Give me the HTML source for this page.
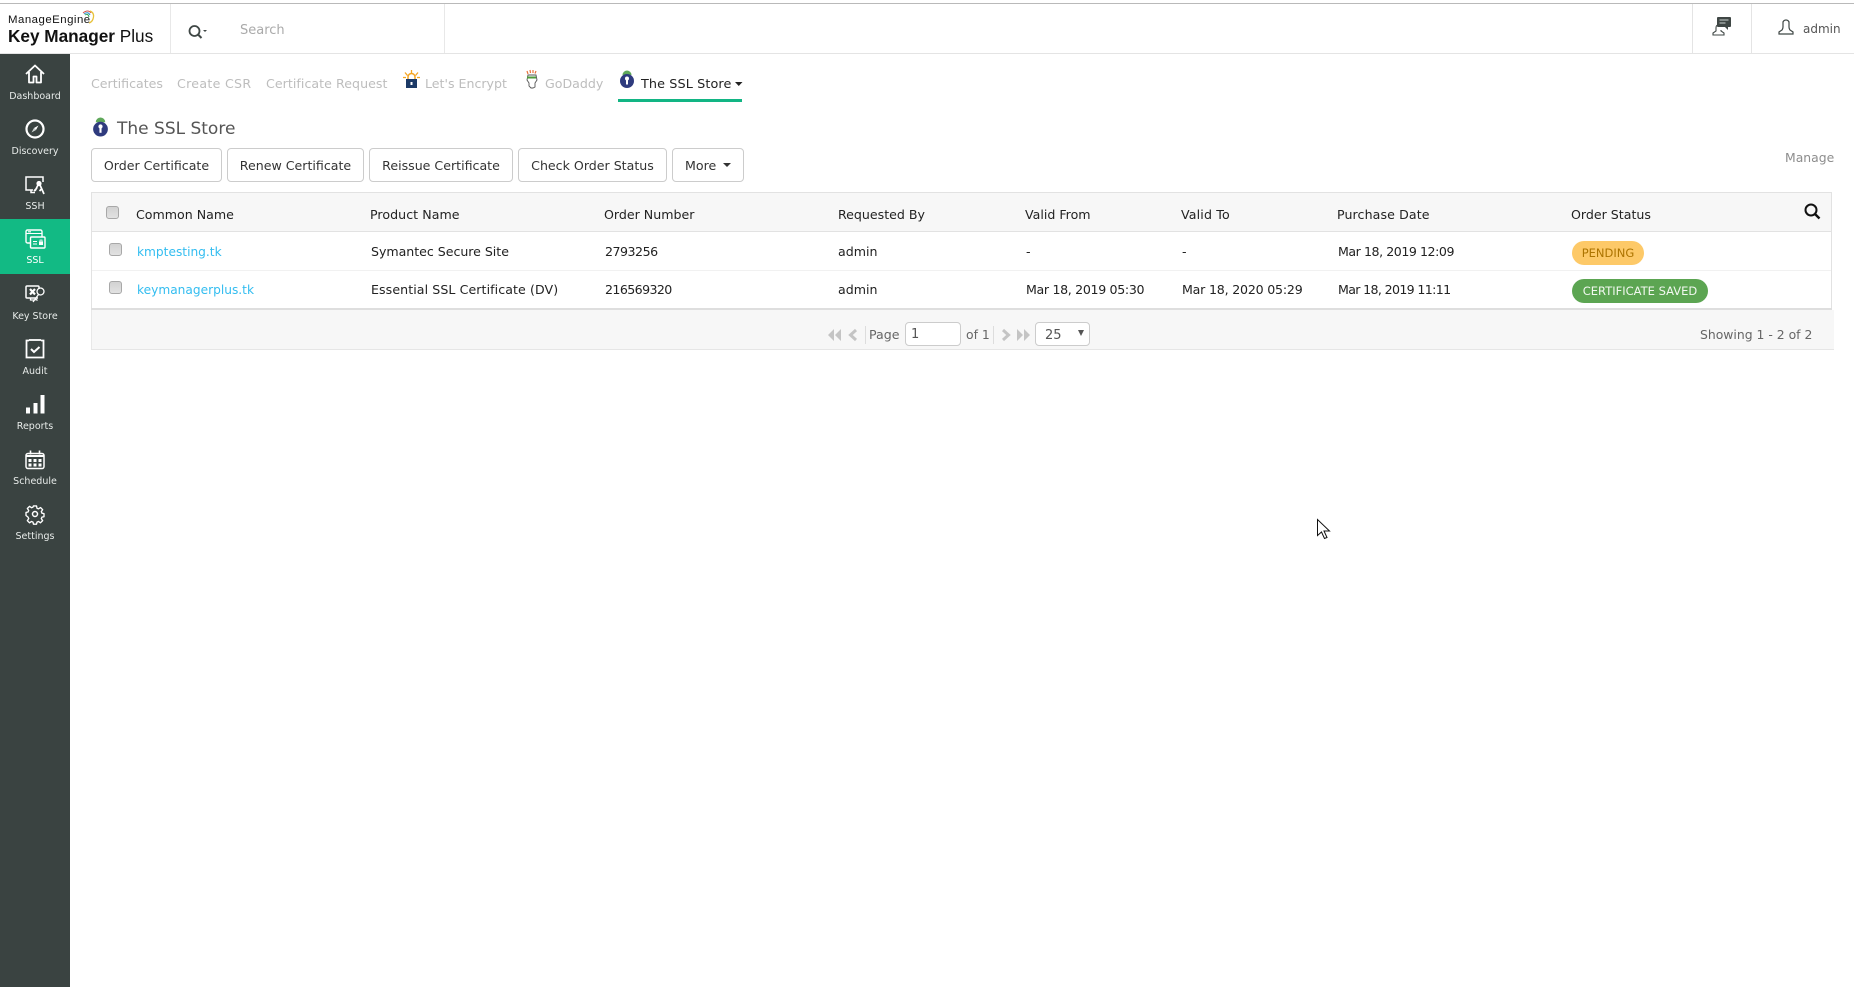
<!DOCTYPE html>
<html><head><meta charset="utf-8"><title>Key Manager Plus</title>
<style>
html,body{margin:0;padding:0;width:1854px;height:987px;overflow:hidden;background:#fff}
body{position:relative;font-family:"DejaVu Sans","Liberation Sans",sans-serif;font-size:13px;color:#222}
.a,.t{position:absolute}
.t{white-space:nowrap;line-height:20px;height:20px}
.side{position:absolute;left:0;top:54px;width:70px;height:933px;background:#3a4341}
.lb{position:absolute;left:0;width:70px;text-align:center;font-size:9.5px;line-height:14px;color:#e8ecea;white-space:nowrap}
.tab{color:#bdbdbd;font-size:12.6px}
.btn{position:absolute;top:148px;height:32px;border:1px solid #ccc;border-radius:4px;background:#fff;color:#333;text-align:center;line-height:33px;font-size:12.6px;white-space:nowrap;box-sizing:content-box}
.cb{position:absolute;width:11px;height:11px;background:linear-gradient(#d2d2d2,#e2e2e2);border:1px solid #a8a8a8;border-radius:3px}
.th{color:#222;font-size:12.6px}
.td{color:#222;font-size:12.6px}
.lnk{color:#33bdf0;font-size:12.2px}
.bd{position:absolute;height:24px;border-radius:12px;text-align:center;line-height:24px;font-size:11.5px;white-space:nowrap}
svg{position:absolute;overflow:visible}
</style></head><body>
<!-- top header -->
<div class="a" style="left:0;top:3px;width:1854px;height:1px;background:#b9b9b9"></div>
<div class="a" style="left:0;top:53px;width:1854px;height:1px;background:#e4e4e4"></div>
<div class="a" style="left:170px;top:4px;width:1px;height:49px;background:#e8e8e8"></div>
<div class="a" style="left:444px;top:4px;width:1px;height:49px;background:#e8e8e8"></div>
<div class="a" style="left:1692px;top:4px;width:1px;height:49px;background:#e4e4e4"></div>
<div class="a" style="left:1751px;top:4px;width:1px;height:49px;background:#e4e4e4"></div>
<span class="t" style="left:8px;top:10px;font-size:11.4px;color:#111;font-family:'Liberation Sans',sans-serif;letter-spacing:.5px">ManageEngine</span>
<svg style="left:82px;top:10px" width="14" height="14" viewBox="0 0 14 14" fill="none"><path d="M1 3Q6-1 9 3" stroke="#d9534f" stroke-width="1"/><path d="M2 4Q6 1 8 5" stroke="#2a8fc9" stroke-width="1"/><path d="M8 1Q13 3 11 9Q10 12 7 13" stroke="#e8c23a" stroke-width="1.3"/><path d="M3 5Q6 3 7 7" stroke="#3aa655" stroke-width="1"/></svg>
<span class="t" style="left:8px;top:26px;font-size:17.2px;color:#111;font-family:'Liberation Sans',sans-serif"><span style="font-weight:700">Key Manager</span> Plus</span>
<svg style="left:188px;top:24px" width="20" height="16" viewBox="0 0 20 16" fill="none"><circle cx="6.5" cy="7" r="5" stroke="#3f4745" stroke-width="1.8"/><path d="M10 10.500l3.500 3.500" stroke="#3f4745" stroke-width="2"/><path d="M15 6h4l-2 2z" fill="#3f4745"/></svg>
<span class="t" style="left:240px;top:21px;color:#aaa;font-size:13px">Search</span>
<svg style="left:1712px;top:17px" width="20" height="19" viewBox="0 0 20 19" fill="none"><path d="M6 0h12a1 1 0 0 1 1 1v8a1 1 0 0 1-1 1h-2v3l-3-3H6a1 1 0 0 1-1-1V1a1 1 0 0 1 1-1z" fill="#3f4745"/><path d="M7.500 3h9M7.500 6h6" stroke="#c9d0ce" stroke-width="1"/><path d="M4 11v3l-3 2v2h11v-2l-3-2v-1M4 11c0-2 1-3 2-3" stroke="#3f4745" stroke-width="1.100"/></svg>
<svg style="left:1778px;top:20px" width="16" height="15" viewBox="0 0 16 15" fill="none"><path d="M5 2.500a3 2.500 0 0 1 6 0V7c0 1.500.5 2 1 3l3 2v2H1v-2l3-2c.5-1 1-1.500 1-3z" stroke="#3f4745" stroke-width="1.200"/></svg>
<span class="t" style="left:1803px;top:19px;color:#555;font-size:12px">admin</span>

<!-- sidebar -->
<div class="side"></div>
<div class="a" style="left:0;top:219px;width:70px;height:55px;background:#12ba84"></div>
<svg style="left:25px;top:64px" width="20" height="20" viewBox="0 0 20 20" fill="none" stroke="#fff" stroke-width="1.800" stroke-linejoin="round"><path d="M1 10L10 1.500 19 10M4 8v10.500h4.500V12.500h3v6H16V8"/></svg>
<svg style="left:25px;top:119px" width="20" height="20" viewBox="0 0 20 20" fill="none"><circle cx="10" cy="10" r="8.500" stroke="#fff" stroke-width="2.200"/><path d="M13.500 6.500L11 11 9 9z" fill="#fff"/><path d="M6.500 13.500L11 11 9 9z" fill="#cfd5d3"/></svg>
<svg style="left:25px;top:176px" width="21" height="20" viewBox="0 0 21 20" fill="none"><path d="M18 6V1H1v13h7M6 14v2.500h4" stroke="#fff" stroke-width="1.500"/><circle cx="14" cy="7.500" r="2.600" fill="#fff"/><path d="M13 9l-3 6M15 9l4 9M12 12l-3 3M16.500 13l-2 2" stroke="#fff" stroke-width="1.700"/></svg>
<svg style="left:25px;top:229px" width="21" height="20" viewBox="0 0 21 20" fill="none" stroke="#fff"><rect x="1" y="1" width="16" height="13" rx="1.500" stroke-width="1.400"/><path d="M1 4.500h16M3 2.800h3" stroke-width="1.100"/><rect x="5.500" y="8" width="14.500" height="11" rx="1" fill="#12ba84" stroke-width="1.400"/><path d="M8 12.500h4M8 15h4" stroke-width="1.100"/><rect x="14" y="12.500" width="4" height="3.500" fill="#fff" stroke="none"/><path d="M15 12.500v-1.500h2v1.500" stroke-width=".8"/></svg>
<svg style="left:25px;top:285px" width="21" height="20" viewBox="0 0 21 20" fill="none" stroke="#fff"><path d="M13 13H2a1 1 0 0 1-1-1V2a1 1 0 0 1 1-1h11a1 1 0 0 1 1 1v2" stroke-width="1.500"/><path d="M5 4l5 5.500M10 4L5 9.500" stroke-width="2.200"/><path d="M5.500 13v2h5" stroke-width="1.300"/><circle cx="15.500" cy="6.500" r="3.500" stroke-width="1.300"/><path d="M13.500 9.500L8 17M10.500 14l2 1.500" stroke-width="1.300"/></svg>
<svg style="left:25px;top:339px" width="20" height="20" viewBox="0 0 20 20" fill="none" stroke="#fff"><path d="M4 1.500H1.500v17h17v-17H16" stroke-width="1.800"/><path d="M4 1h12" stroke-width="1.800"/><path d="M6 10l3 3 5.500-5" stroke-width="2"/></svg>
<svg style="left:25px;top:394px" width="20" height="20" viewBox="0 0 20 20" fill="#fff"><rect x="1" y="13.500" width="4" height="6"/><rect x="8.500" y="9" width="4" height="10.500"/><rect x="15.500" y="1" width="4" height="18.500"/></svg>
<svg style="left:25px;top:450px" width="20" height="20" viewBox="0 0 20 20" fill="none" stroke="#fff"><rect x="1" y="3.500" width="18" height="15" rx="2" stroke-width="1.500"/><path d="M1 5h18v2H1z" fill="#fff" stroke="none"/><path d="M5.500 0.500v4M14.500 0.500v4" stroke-width="1.600"/><g fill="#fff" stroke="none"><rect x="3.500" y="9" width="3" height="3"/><rect x="8.500" y="9" width="3" height="3"/><rect x="13.500" y="9" width="3" height="3"/><rect x="3.500" y="13.500" width="3" height="3"/><rect x="8.500" y="13.500" width="3" height="3"/><rect x="13.500" y="13.500" width="3" height="3"/></g></svg>
<svg style="left:25px;top:504px" width="20" height="20" viewBox="0 0 20 20" fill="none" stroke="#fff" stroke-width="1.500" stroke-linejoin="round"><path d="M8.300 1h3.400l.5 2.600 1.700.7 2.200-1.500 2.400 2.400-1.500 2.200.7 1.700 2.300.5v3.400l-2.300.5-.7 1.700 1.500 2.200-2.400 2.400-2.200-1.500-1.700.7-.5 2.300H8.300l-.5-2.300-1.700-.7-2.200 1.500-2.400-2.400 1.500-2.200-.7-1.700L0 11.700V8.300l2.300-.5.7-1.700L1.500 3.900l2.400-2.400 2.200 1.500 1.700-.7z" transform="translate(1 1) scale(.9)"/><circle cx="10" cy="10" r="2.500"/></svg>
<div class="lb" style="top:90px">Dashboard</div>
<div class="lb" style="top:145px">Discovery</div>
<div class="lb" style="top:200px">SSH</div>
<div class="lb" style="top:254px;color:#fff">SSL</div>
<div class="lb" style="top:310px">Key Store</div>
<div class="lb" style="top:365px">Audit</div>
<div class="lb" style="top:420px">Reports</div>
<div class="lb" style="top:475px">Schedule</div>
<div class="lb" style="top:530px">Settings</div>

<!-- tabs -->
<span class="t tab" style="left:91px;top:74px">Certificates</span>
<span class="t tab" style="left:177px;top:74px;letter-spacing:.3px">Create CSR</span>
<span class="t tab" style="left:266px;top:74px;letter-spacing:.05px">Certificate Request</span>
<svg style="left:403px;top:70px" width="17" height="19" viewBox="0 0 17 19" fill="none"><path d="M8.500 0v4M2 2.500l2.500 3M15 2.500l-2.500 3M0 7.500h3M14 7.500h3" stroke="#f5a623" stroke-width="1.300"/><path d="M5 9V7a3.500 3.500 0 0 1 7 0v2" stroke="#f5a623" stroke-width="1.500"/><rect x="3" y="9" width="11" height="9" fill="#1c3a66"/><rect x="7.500" y="12" width="2" height="3" fill="#fff"/></svg>
<span class="t tab" style="left:425px;top:74px">Let's Encrypt</span>
<svg style="left:525px;top:70px" width="15" height="19" viewBox="0 0 15 19" fill="none"><path d="M2 1l1 3M5 0l.5 3M8 0v3M11 1l-1 2.500" stroke="#e8703a" stroke-width="1.200"/><path d="M3 5h8l1 5-2 3v4l-2 1H6l-2-2v-3L2 10z" fill="#fff" stroke="#555" stroke-width=".9"/><rect x="2" y="6.500" width="9" height="2" fill="#4f9a3a"/></svg>
<span class="t tab" style="left:545px;top:74px">GoDaddy</span>
<svg style="left:620px;top:70px" width="14" height="19" viewBox="0 0 14 19"><path d="M2.500 5a4.500 4.500 0 0 1 9 0z" fill="#5fa85a"/><circle cx="7" cy="11" r="7" fill="#2f3b7e"/><circle cx="7" cy="8.500" r="2" fill="#fff"/><rect x="6" y="9" width="2" height="5.500" fill="#fff"/></svg>
<span class="t" style="left:641px;top:75px;color:#222;font-size:12.8px;letter-spacing:.1px">The SSL Store</span>
<svg style="left:734.500px;top:82px" width="8" height="4" viewBox="0 0 8 4"><path d="M0 0h7.500L3.750 4z" fill="#222"/></svg>
<div class="a" style="left:618px;top:99px;width:124px;height:3px;background:#12b584"></div>

<!-- title -->
<svg style="left:93px;top:117px" width="15" height="20" viewBox="0 0 14 19"><path d="M2.500 5a4.500 4.500 0 0 1 9 0z" fill="#5fa85a"/><circle cx="7" cy="11.500" r="7" fill="#2f3b7e"/><circle cx="7" cy="9" r="2" fill="#fff"/><rect x="6" y="9.500" width="2" height="5.500" fill="#fff"/></svg>
<span class="t" style="left:117px;top:119px;font-size:17px;color:#555">The SSL Store</span>

<!-- buttons -->
<div class="btn" style="left:91px;width:129px">Order Certificate</div>
<div class="btn" style="left:227px;width:135px">Renew Certificate</div>
<div class="btn" style="left:369px;width:142px">Reissue Certificate</div>
<div class="btn" style="left:518px;width:147px">Check Order Status</div>
<div class="btn" style="left:672px;width:70px;text-align:left;text-indent:12px">More</div>
<svg style="left:723px;top:163px" width="8" height="4" viewBox="0 0 8 4"><path d="M0 0h8L4 4z" fill="#333"/></svg>
<span class="t" style="left:1785px;top:148px;color:#8d8d8d;font-size:12.4px">Manage</span>

<!-- table -->
<div class="a" style="left:91px;top:192px;width:1741px;height:39px;background:#f7f7f7"></div>
<div class="a" style="left:91px;top:192px;width:1741px;height:1px;background:#e2e2e2"></div>
<div class="a" style="left:91px;top:231px;width:1741px;height:1px;background:#e2e2e2"></div>
<div class="a" style="left:91px;top:270px;width:1741px;height:1px;background:#f1f1f1"></div>
<div class="a" style="left:91px;top:192px;width:1px;height:118px;background:#e2e2e2"></div>
<div class="a" style="left:1831px;top:192px;width:1px;height:118px;background:#e2e2e2"></div>
<div class="a" style="left:91px;top:308px;width:1741px;height:2px;background:#dedede"></div>
<div class="a" style="left:91px;top:310px;width:1743px;height:39px;background:#f7f7f7"></div>
<div class="a" style="left:91px;top:310px;width:1px;height:40px;background:#e8e8e8"></div>
<div class="a" style="left:91px;top:349px;width:1743px;height:1px;background:#e6e6e6"></div>

<div class="cb" style="left:106px;top:206px"></div>
<div class="cb" style="left:109px;top:243px"></div>
<div class="cb" style="left:109px;top:281px"></div>

<span class="t th" style="left:136px;top:205px">Common Name</span>
<span class="t th" style="left:370px;top:205px;letter-spacing:.05px">Product Name</span>
<span class="t th" style="left:604px;top:205px">Order Number</span>
<span class="t th" style="left:838px;top:205px">Requested By</span>
<span class="t th" style="left:1025px;top:205px">Valid From</span>
<span class="t th" style="left:1181px;top:205px;letter-spacing:.15px">Valid To</span>
<span class="t th" style="left:1337px;top:205px;letter-spacing:.1px">Purchase Date</span>
<span class="t th" style="left:1571px;top:205px">Order Status</span>
<svg style="left:1804px;top:203px" width="17" height="17" viewBox="0 0 17 17" fill="none"><circle cx="7" cy="7" r="5.500" stroke="#111" stroke-width="2"/><path d="M11 11l4.500 4.500" stroke="#111" stroke-width="2.400"/></svg>

<span class="t lnk" style="left:137px;top:242px">kmptesting.tk</span>
<span class="t td" style="left:371px;top:242px;letter-spacing:-.03px">Symantec Secure Site</span>
<span class="t td" style="left:605px;top:242px;letter-spacing:-.5px">2793256</span>
<span class="t td" style="left:838px;top:242px">admin</span>
<span class="t td" style="left:1026px;top:242px">-</span>
<span class="t td" style="left:1182px;top:242px">-</span>
<span class="t td" style="left:1338px;top:242px;letter-spacing:-.45px">Mar 18, 2019 12:09</span>
<div class="bd" style="left:1572px;top:241px;width:72px;background:#fdc968;color:#ad7400">PENDING</div>

<span class="t lnk" style="left:137px;top:280px">keymanagerplus.tk</span>
<span class="t td" style="left:371px;top:280px;letter-spacing:.08px">Essential SSL Certificate (DV)</span>
<span class="t td" style="left:605px;top:280px;letter-spacing:-.6px">216569320</span>
<span class="t td" style="left:838px;top:280px">admin</span>
<span class="t td" style="left:1026px;top:280px;letter-spacing:-.33px">Mar 18, 2019 05:30</span>
<span class="t td" style="left:1182px;top:280px;letter-spacing:-.2px">Mar 18, 2020 05:29</span>
<span class="t td" style="left:1338px;top:280px;letter-spacing:-.65px">Mar 18, 2019 11:11</span>
<div class="bd" style="left:1572px;top:279px;width:136px;background:#5ca552;color:#f2f8f0">CERTIFICATE SAVED</div>

<!-- pagination -->
<svg style="left:828px;top:329px" width="13" height="12" viewBox="0 0 13 12" fill="#c4c4c4"><path d="M6 0v12L0 6zM13 0v12L7 6z"/></svg>
<svg style="left:847px;top:329px" width="11" height="12" viewBox="0 0 11 12" fill="none"><path d="M9 1L3.500 6 9 11" stroke="#c4c4c4" stroke-width="3"/></svg>
<div class="a" style="left:865px;top:326px;width:1px;height:18px;background:#ddd"></div>
<span class="t" style="left:869px;top:325px;color:#666;font-size:12.6px">Page</span>
<div class="a" style="left:905px;top:322px;width:54px;height:22px;background:#fff;border:1px solid #ccc;border-radius:4px"></div>
<span class="t" style="left:911px;top:325px;color:#555;font-size:13px">1</span>
<span class="t" style="left:966px;top:325px;color:#666;font-size:12.4px">of 1</span>
<div class="a" style="left:993px;top:326px;width:1px;height:18px;background:#ddd"></div>
<svg style="left:1001px;top:329px" width="11" height="12" viewBox="0 0 11 12" fill="none"><path d="M2 1l5.500 5L2 11" stroke="#c4c4c4" stroke-width="3"/></svg>
<svg style="left:1017px;top:329px" width="13" height="12" viewBox="0 0 13 12" fill="#c4c4c4"><path d="M0 0v12l6-6zM7 0v12l6-6z"/></svg>
<div class="a" style="left:1035px;top:322px;width:53px;height:22px;background:#fff;border:1px solid #ccc;border-radius:4px"></div>
<span class="t" style="left:1045px;top:326px;color:#555;font-size:13px">25</span>
<svg style="left:1078px;top:330px" width="6" height="6" viewBox="0 0 6 6"><path d="M0 0h6L3 6z" fill="#555"/></svg>
<span class="t" style="left:1700px;top:325px;color:#666;font-size:12.4px">Showing 1 - 2 of 2</span>

<!-- cursor -->
<svg style="left:1317px;top:519px" width="14" height="21" viewBox="0 0 14 21"><path d="M.5.500v16l4-3.500 3 6.500 2.500-1-3-6.500h5.500z" fill="#fff" stroke="#111" stroke-width="1"/></svg>
</body></html>
